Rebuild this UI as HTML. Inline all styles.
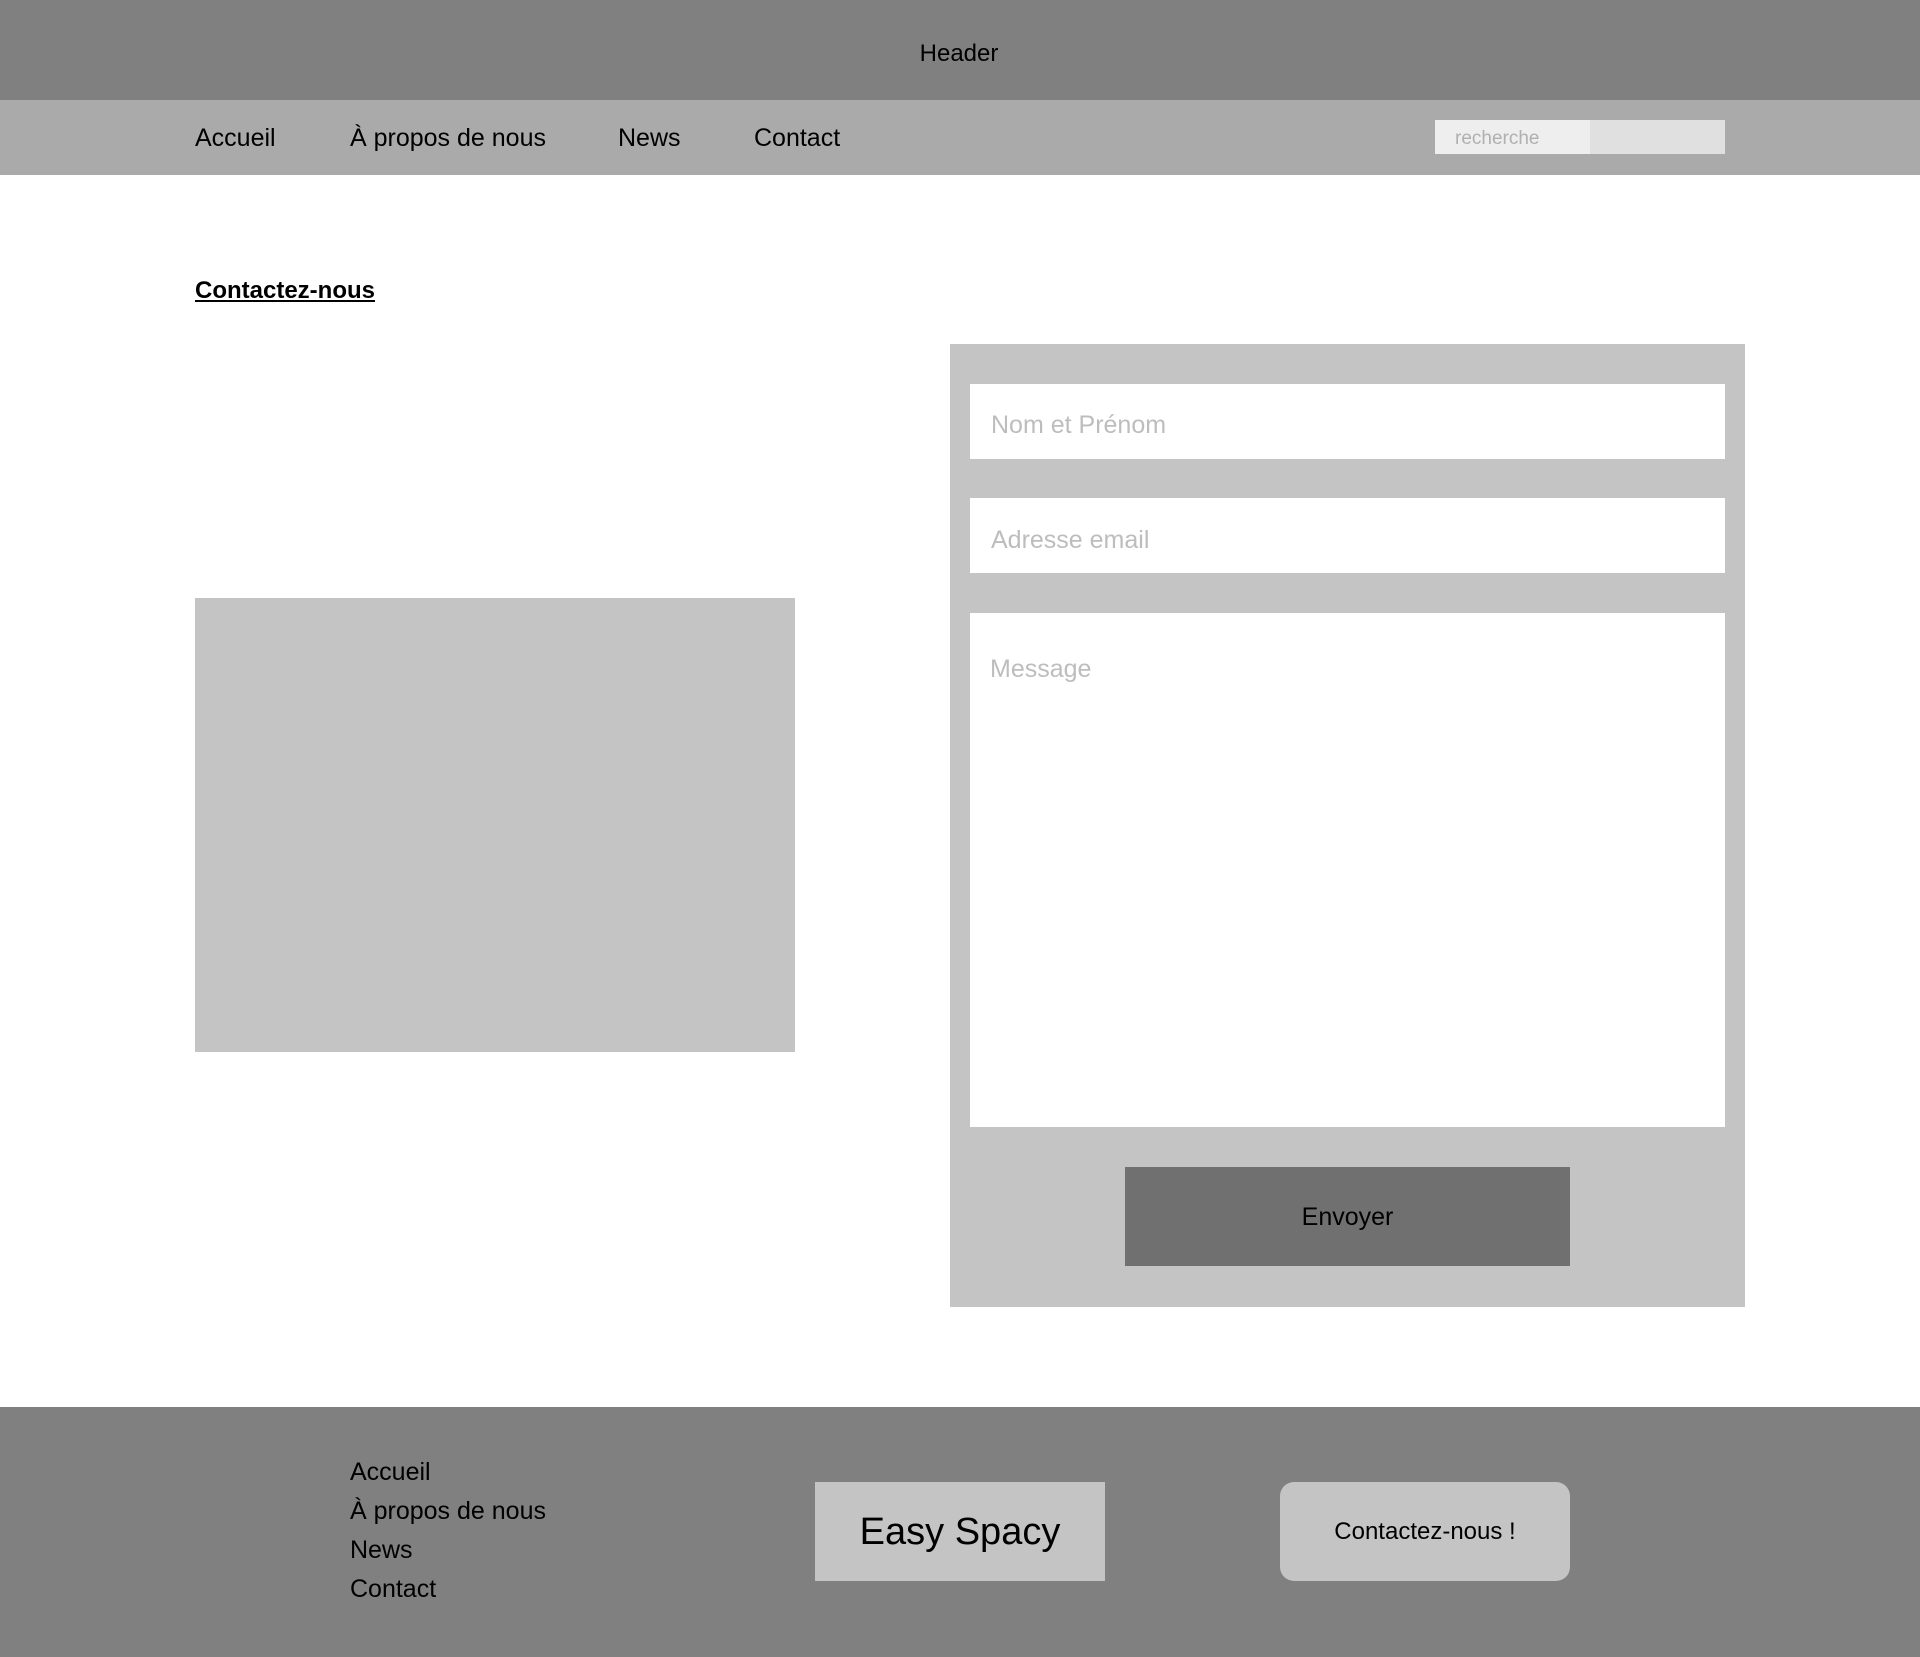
<!DOCTYPE html>
<html><head><meta charset="utf-8"><style>
*{margin:0;padding:0;box-sizing:border-box}
body{width:1920px;height:1657px;position:relative;font-family:"Liberation Sans",sans-serif;background:#fff;color:#000;overflow:hidden}
.a{position:absolute}
.t{white-space:nowrap;line-height:1}
</style></head><body>
<div class="a" style="left:0;top:0;width:1920px;height:100px;background:#808080"></div>
<div class="a t" style="left:0;width:1918px;top:42px;text-align:center;font-size:24px">Header</div>
<div class="a" style="left:0;top:100px;width:1920px;height:75px;background:#aaaaaa"></div>
<div class="a t" style="left:195px;top:126px;font-size:25px">Accueil</div>
<div class="a t" style="left:350px;top:126px;font-size:25px">À propos de nous</div>
<div class="a t" style="left:618px;top:126px;font-size:25px">News</div>
<div class="a t" style="left:754px;top:126px;font-size:25px">Contact</div>
<div class="a" style="left:1435px;top:120px;width:290px;height:34px;background:#e0e0e0"></div>
<div class="a" style="left:1435px;top:120px;width:155px;height:34px;background:#eeeeee"></div>
<div class="a t" style="left:1455px;top:129px;font-size:19px;color:#b0b0b0">recherche</div>
<div class="a t" style="left:195px;top:279px;font-size:24px;font-weight:bold;text-decoration:underline">Contactez-nous</div>
<div class="a" style="left:195px;top:598px;width:600px;height:454px;background:#c4c4c4"></div>
<div class="a" style="left:950px;top:344px;width:795px;height:963px;background:#c4c4c4"></div>
<div class="a" style="left:970px;top:384px;width:755px;height:75px;background:#fff"></div>
<div class="a t" style="left:991px;top:413px;font-size:25px;color:#bdbdbd">Nom et Prénom</div>
<div class="a" style="left:970px;top:498px;width:755px;height:75px;background:#fff"></div>
<div class="a t" style="left:991px;top:528px;font-size:25px;color:#bdbdbd">Adresse email</div>
<div class="a" style="left:970px;top:613px;width:755px;height:514px;background:#fff"></div>
<div class="a t" style="left:990px;top:657px;font-size:25px;color:#bdbdbd">Message</div>
<div class="a" style="left:1125px;top:1167px;width:445px;height:99px;background:#707070"></div>
<div class="a t" style="left:1125px;width:445px;top:1205px;text-align:center;font-size:25px">Envoyer</div>
<div class="a" style="left:0;top:1407px;width:1920px;height:250px;background:#808080"></div>
<div class="a t" style="left:350px;top:1460px;font-size:25px">Accueil</div>
<div class="a t" style="left:350px;top:1499px;font-size:25px">À propos de nous</div>
<div class="a t" style="left:350px;top:1538px;font-size:25px">News</div>
<div class="a t" style="left:350px;top:1577px;font-size:25px">Contact</div>
<div class="a" style="left:815px;top:1482px;width:290px;height:99px;background:#c4c4c4"></div>
<div class="a t" style="left:815px;width:290px;top:1513px;text-align:center;font-size:38px">Easy Spacy</div>
<div class="a" style="left:1280px;top:1482px;width:290px;height:99px;background:#c4c4c4;border-radius:14px"></div>
<div class="a t" style="left:1280px;width:290px;top:1520px;text-align:center;font-size:24px">Contactez-nous !</div>
</body></html>
